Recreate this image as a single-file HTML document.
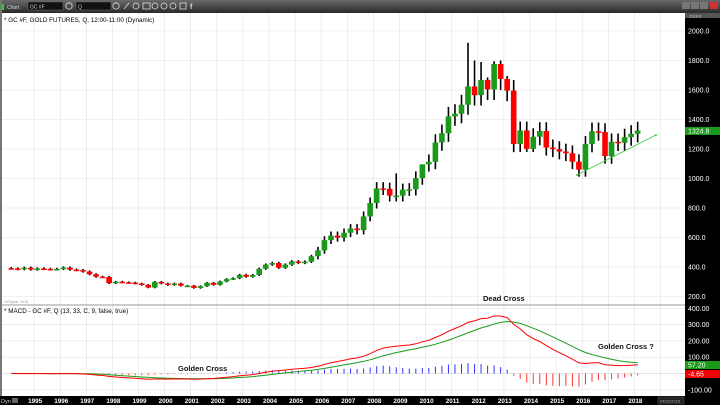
<!DOCTYPE html>
<html><head><meta charset="utf-8"><style>
html,body{margin:0;padding:0;width:720px;height:405px;overflow:hidden;background:#fff;font-family:"Liberation Sans",sans-serif}
</style></head><body>
<svg id="s" width="720" height="405" xmlns="http://www.w3.org/2000/svg" font-family="Liberation Sans, sans-serif">
<defs><linearGradient id="tb" x1="0" y1="0" x2="0" y2="1"><stop offset="0" stop-color="#6a6a6a"/><stop offset="1" stop-color="#2a2a2a"/></linearGradient></defs>
<rect x="0" y="0" width="720" height="13" fill="url(#tb)"/>
<rect x="0" y="0" width="2" height="405" fill="#777"/>
<rect x="2" y="4" width="2" height="6" fill="#3c3"/>
<text x="7" y="9" font-size="5" fill="#ddd">Chart</text>
<rect x="28" y="2" width="35" height="8" fill="#111" stroke="#666" stroke-width=".5"/>
<text x="30" y="8.5" font-size="5" fill="#ccc">GC #F</text>
<circle cx="69" cy="6" r="3.2" fill="none" stroke="#ddd" stroke-width=".8"/>
<rect x="76" y="2" width="35" height="8" fill="#111" stroke="#666" stroke-width=".5"/>
<text x="78" y="8.5" font-size="5" fill="#ccc">Q</text>
<circle cx="116" cy="6" r="3.2" fill="none" stroke="#ddd" stroke-width=".8"/>
<g fill="none" stroke="#ddd" stroke-width=".8"><path d="M124 9 L129 3"/><circle cx="136" cy="6" r="3"/><rect x="143" y="3" width="7" height="6"/><circle cx="155" cy="6" r="3"/><circle cx="164" cy="6" r="3"/><circle cx="173" cy="6" r="3"/><rect x="180" y="3" width="6" height="6"/></g>
<text x="190" y="9" font-size="7" fill="#ddd" font-weight="bold">f</text>
<rect x="682" y="2" width="8" height="7" fill="#777"/><rect x="691" y="2" width="8" height="7" fill="#777"/><rect x="700" y="2" width="8" height="7" fill="#777"/><rect x="710" y="2" width="8" height="7" fill="#c33"/>
<rect x="2" y="13" width="683" height="383" fill="#fff"/>
<g id="grid" stroke="#e2e2e2" stroke-width=".6"></g>
<rect x="685" y="13" width="35" height="392" fill="#000"/>
<rect x="685" y="13" width="35" height="5" fill="#555"/>
<text x="689" y="17.3" font-size="4" fill="#ccc">2018.6</text>
<line x1="2" y1="305" x2="685" y2="305" stroke="#999" stroke-width="1"/>
<text x="4" y="22" font-size="6.3" fill="#000">* GC #F, GOLD FUTURES, Q, 12:00-11:00 (Dynamic)</text>
<text x="4" y="303" font-size="3.5" fill="#999">©eSignal, 2018</text>
<text x="4" y="313" font-size="6.3" fill="#000">* MACD - GC #F, Q (13, 33, C, 9, false, true)</text>
<g id="ax" font-size="7" fill="#fff"></g>
<g id="c"></g>
<line x1="577" y1="175" x2="656" y2="135" stroke="#4c4" stroke-width=".8"/>
<circle cx="577" cy="175" r="1" fill="#4c4"/><circle cx="656" cy="135" r="1" fill="#4c4"/>
<rect x="685" y="127" width="35" height="8" fill="#1a9a1a"/>
<text x="688" y="133.5" font-size="7" fill="#fff">1324.8</text>
<g id="m"></g>
<rect x="685" y="361" width="35" height="8" fill="#1a9a1a"/>
<text x="688" y="367.5" font-size="7" fill="#fff">57.20</text>
<rect x="685" y="370" width="35" height="8" fill="#e00"/>
<text x="688" y="376.5" font-size="7" fill="#fff">-4.65</text>
<text x="483" y="301" font-size="7.5" font-weight="bold" fill="#111">Dead Cross</text>
<text x="178" y="371" font-size="7.5" font-weight="bold" fill="#111">Golden Cross</text>
<text x="598" y="349" font-size="7.5" font-weight="bold" fill="#111">Golden Cross ?</text>
<rect x="0" y="396" width="720" height="9" fill="#000"/>
<text x="1" y="403" font-size="5.5" fill="#ccc">Dyn</text>
<rect x="12" y="398" width="6" height="5" fill="#666"/>
<g id="yr" font-size="6.3" font-weight="bold" fill="#fff"></g>
<rect x="658" y="397" width="26" height="7" fill="#222" stroke="#555" stroke-width=".5"/>
<text x="660" y="402.5" font-size="4" fill="#aaa">04/02/2018</text>
</svg>
<script>
(function(){
var NS="http://www.w3.org/2000/svg";
function el(p,t,a){var e=document.createElementNS(NS,t);for(var k in a)e.setAttribute(k,a[k]);p.appendChild(e);return e;}
var grid=document.getElementById('grid'),ax=document.getElementById('ax'),c=document.getElementById('c'),m=document.getElementById('m'),yr=document.getElementById('yr');
function py(p){return 31+(2000-p)*0.1475;}
function my(v){return 373.5-v*0.163;}
function ys(Y){return 8+(Y-1994)*26.1;}
for(var Y=1995;Y<=2019;Y++){var x=ys(Y);if(x<685){el(grid,'line',{x1:x,y1:13,x2:x,y2:396});}
 if(Y<=2018){var t=el(yr,'text',{x:x-6,y:403});t.textContent=Y;}}
for(var p=200;p<=2000;p+=200){el(grid,'line',{x1:2,y1:py(p),x2:685,y2:py(p)});var t=el(ax,'text',{x:688,y:py(p)+2.5});t.textContent=p.toFixed(1);}
[400,300,200,100,-100].forEach(function(v){el(grid,'line',{x1:2,y1:my(v),x2:685,y2:my(v)});var t=el(ax,'text',{x:688,y:my(v)+2.5});t.textContent=v.toFixed(2);});
el(grid,'line',{x1:2,y1:my(0),x2:685,y2:my(0),stroke:'#ccc'});
var C=[390,385,395,383,390,387,384,387,396,382,379,369,351,334,332,290,300,296,294,288,279,261,299,288,278,288,273,273,258,270,293,279,302,318,324,347,334,346,388,416,427,395,416,438,428,436,473,513,582,613,599,632,661,650,743,834,933,930,884,884,924,927,1003,1096,1113,1244,1307,1421,1439,1500,1624,1565,1668,1604,1776,1675,1596,1234,1326,1201,1283,1322,1210,1199,1183,1171,1114,1060,1233,1320,1315,1152,1249,1242,1280,1303,1325];
var H={70:1920,71:1800,72:1790,73:1685,74:1795,75:1800,63:1070,59:1035,76:1695};
var L={78:1180,79:1180,80:1180};
for(var i=0;i<C.length;i++){
 var o=i?C[i-1]:392,cl=C[i];
 var x=ys(1994)+(i+0.5)*6.525;
 var mx=Math.max(o,cl),mn=Math.min(o,cl),f=cl<500?0.02:0.045;
 var hi=H[i]||mx*(1+f),lo=L[i]||mn*(1-f);
 el(c,'line',{x1:x,y1:py(hi),x2:x,y2:py(lo),stroke:'#000','stroke-width':1.6});
 var bt=py(mx),bh=Math.max(py(mn)-bt,1.5);
 el(c,'rect',{x:x-2.8,y:bt,width:5.6,height:bh,fill:cl>=o?'#1a9a1a':'#f00'});
}
function ema(a,n){var k=2/(n+1),r=[a[0]];for(var i=1;i<a.length;i++)r.push(a[i]*k+r[i-1]*(1-k));return r;}
var e1=ema(C,13),e2=ema(C,33),md=e1.map(function(v,i){return v-e2[i];}),sg=ema(md,9);
var pr='',pg='';
for(var i=0;i<C.length;i++){var x=ys(1994)+(i+0.5)*6.525;pr+=(i?'L':'M')+x.toFixed(1)+' '+my(md[i]).toFixed(1);pg+=(i?'L':'M')+x.toFixed(1)+' '+my(sg[i]).toFixed(1);
 var hv=md[i]-sg[i];if(Math.abs(hv)>1)el(m,'line',{x1:x,y1:my(0),x2:x,y2:my(hv),stroke:hv>0?'#33f':'#f33','stroke-width':1});}
el(m,'path',{d:pg,fill:'none',stroke:'#1a9a1a','stroke-width':1});
el(m,'path',{d:pr,fill:'none',stroke:'#f00','stroke-width':1});
})();
</script>
</body></html>
